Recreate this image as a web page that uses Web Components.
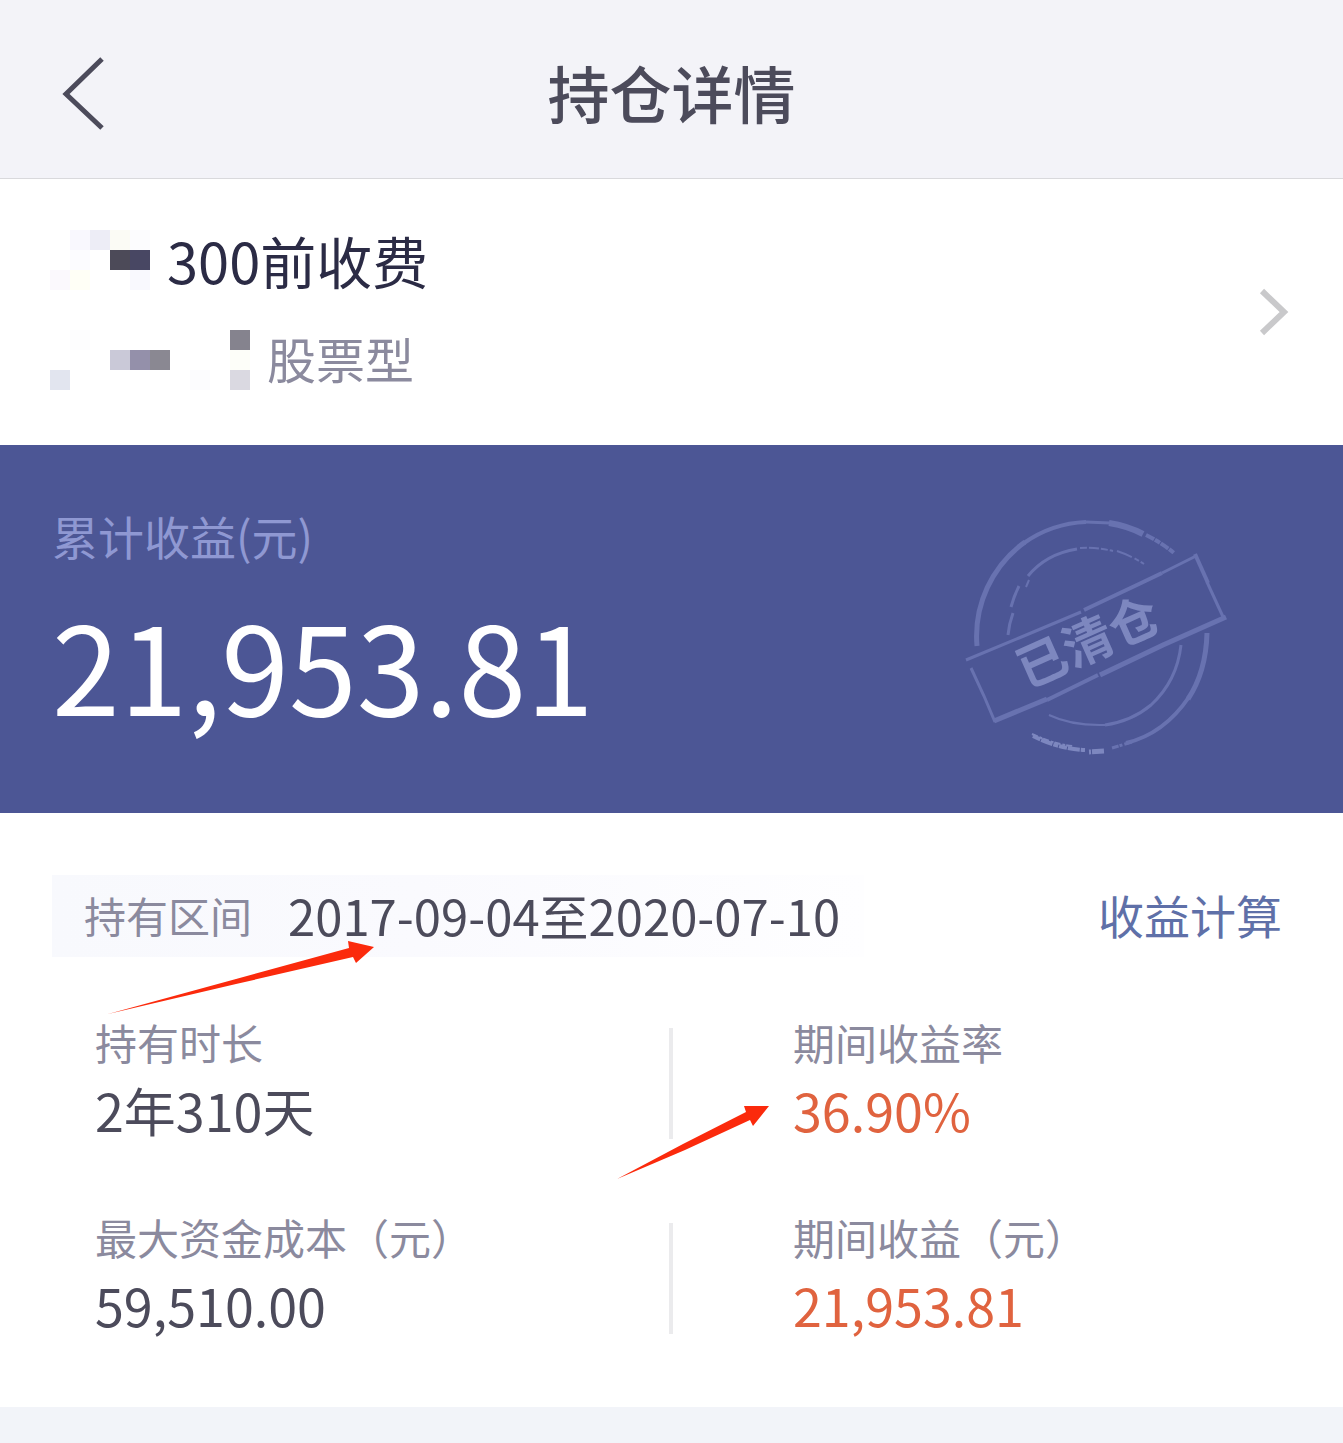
<!DOCTYPE html>
<html lang="zh-CN">
<head>
<meta charset="utf-8">
<meta name="viewport" content="width=device-width, initial-scale=1">
<title>持仓详情</title>
<style>
    body {
        margin: 0;
        min-height: 100vh;
        display: flex;
        flex-direction: column;
        background: #f2f4f9;
        font-family: "Noto Sans CJK SC", sans-serif;
        color: #4c4b5b;

        --ink: #4c4b5b;
        --muted: #8b8a9e;
        --brand: #4c5695;
        --link: #5f70a8;
        --gain: #e0633f;
    }
</style>
</head>
<body>
<nav-header>持仓详情</nav-header>
<main>
    <fund-summary>
        <span slot="name">300前收费</span>
        <span slot="type">股票型</span>
    </fund-summary>
    <profit-banner label="累计收益(元)" value="21,953.81">
        <cleared-stamp>已清仓</cleared-stamp>
    </profit-banner>
    <holding-details>
        <holding-period slot="period" label="持有区间">2017-09-04至2020-07-10</holding-period>
        <a slot="action" href="#calc">收益计算</a>
        <stat-item label="持有时长">2年310天</stat-item>
        <stat-item label="期间收益率" gain marked>36.90%</stat-item>
        <stat-item label="最大资金成本（元）">59,510.00</stat-item>
        <stat-item label="期间收益（元）" gain>21,953.81</stat-item>
    </holding-details>
</main>

<script>
function attach(host, html) {
    const template = document.createElement("template");
    template.innerHTML = html;
    host.attachShadow({ mode: "open" }).append(template.content.cloneNode(true));
}

class NavHeader extends HTMLElement {
    constructor() {
        super();
        attach(this, `
            <style>
                :host {
                    display: grid;
                    grid-template-columns: 160px 1fr 160px;
                    align-items: center;
                    height: 172px;
                    padding-top: 6px;
                    background: #f3f3f8;
                    border-bottom: 1px solid #d9d9dc;
                }

                button {
                    display: flex;
                    padding: 0 0 0 60px;
                    border: 0;
                    background: none;
                    color: var(--ink);
                    cursor: pointer;
                }

                h1 {
                    margin: 0;
                    text-align: center;
                    font-size: 62px;
                    line-height: 80px;
                    font-weight: 500;
                }
            </style>
            <button type="button" aria-label="返回">
                <svg width="48" height="76" viewBox="0 0 48 76" fill="none" stroke="currentColor" stroke-width="5">
                    <path d="M42 5 6 40l36 34"/>
                </svg>
            </button>
            <h1><slot></slot></h1>
        `);
    }
}

// Pixelated blocks that hide part of a line; each cell is [column, row, colour]
class MosaicMask extends HTMLElement {
    static cells = {
        name: [
            [1, 0, "#f9f8fe"], [2, 0, "#ededf6"], [3, 0, "#fbfbf5"], [4, 0, "#fcfcfe"],
            [1, 1, "#fcfcff"], [3, 1, "#4c4a58"], [4, 1, "#484763"],
            [0, 2, "#fbf9fd"], [1, 2, "#fffff6"], [4, 2, "#f9f9fe"]
        ],
        type: [
            [1, 0, "#fdfdfe"], [9, 0, "#85838e"],
            [3, 1, "#cac9d8"], [4, 1, "#9490aa"], [5, 1, "#8a8892"], [9, 1, "#fdfef9"],
            [0, 2, "#e2e5ef"], [7, 2, "#fcfcfe"], [9, 2, "#dad9e1"]
        ]
    };

    constructor() {
        super();
        attach(this, `
            <style>
                :host {
                    display: block;
                    flex: none;
                }

                svg {
                    display: block;
                }
            </style>
            <svg height="60" shape-rendering="crispEdges" aria-hidden="true"></svg>
        `);
    }

    connectedCallback() {
        const svg = this.shadowRoot.querySelector("svg");
        svg.setAttribute("width", Number(this.getAttribute("columns")) * 20);
        svg.innerHTML = MosaicMask.cells[this.getAttribute("kind")]
            .map(([x, y, fill]) => `<rect x="${x * 20}" y="${y * 20}" width="20" height="20" fill="${fill}"/>`)
            .join("");
    }
}

class FundSummary extends HTMLElement {
    constructor() {
        super();
        attach(this, `
            <style>
                :host {
                    display: block;
                    background: #fff;
                }

                a {
                    display: flex;
                    justify-content: space-between;
                    align-items: center;
                    padding: 51px 52px 55px 50px;
                    color: inherit;
                    text-decoration: none;
                }

                a > svg {
                    margin-top: 4px;
                }

                .lines {
                    display: grid;
                    gap: 40px;
                }

                .line {
                    display: flex;
                    gap: 17px;
                    height: 60px;
                }

                .name {
                    font-size: 56px;
                    line-height: 60px;
                    color: #2b2b45;
                }

                .type {
                    font-size: 49px;
                    line-height: 56px;
                    color: var(--muted);
                }
            </style>
            <a href="#fund">
                <span class="lines">
                    <span class="line name"><mosaic-mask kind="name" columns="5"></mosaic-mask><slot name="name"></slot></span>
                    <span class="line type"><mosaic-mask kind="type" columns="10"></mosaic-mask><slot name="type"></slot></span>
                </span>
                <svg width="32" height="48" viewBox="0 0 32 48" fill="none" stroke="#c9c9cb" stroke-width="6" aria-hidden="true">
                    <path d="M3 3 25 24 3 45"/>
                </svg>
            </a>
        `);
    }
}

class ClearedStamp extends HTMLElement {
    constructor() {
        super();
        attach(this, `
            <style>
                :host {
                    display: block;
                    flex: none;
                }

                svg {
                    display: block;
                }

                text {
                    font-size: 50px;
                    font-weight: 700;
                    text-anchor: middle;
                }
            </style>
            <svg width="270" height="264" viewBox="20 -3 270 264" fill="none" stroke="#6872b0">
                <!-- outer ring, worn through in places -->
                <path stroke-width="5" d="M37 146A116 116 0 0 1 85 42"/>
                <path stroke-width="4" d="M84 43A116 116 0 0 1 146 22"/>
                <path stroke-width="3" d="M146 22l24 1"/>
                <path stroke-width="6" d="M169 23Q188 26 203 34"/>
                <path stroke-width="4" stroke-dasharray="9 1 6 1" d="M206 35Q222 43 234 53"/>
                <path stroke-width="5" d="M267 133Q266 172 248 199"/>
                <path stroke-width="4" d="M249 197Q224 234 186 243"/>
                <path stroke-width="3" stroke-dasharray="8 2 3 1" d="M192 242l-20 6"/>
                <path stroke="#7d87bf" stroke-width="4" stroke-dasharray="8 1 12 1 5 1" d="M93 236Q119 249 145 250"/>
                <path stroke="#7d87bf" stroke-width="2" stroke-dasharray="6 2 3 1" d="M92 234Q116 245 134 246"/>
                <path stroke="#7d87bf" stroke-width="5" stroke-dasharray="2 1 12" d="M149 252l16-1"/>
                <!-- inner ring -->
                <path stroke-width="3" d="M68 135Q69 124 73 113M71 107Q74 96 79 86"/>
                <path stroke-width="2" d="M86 87l3-7"/>
                <path stroke-width="3" d="M88 76Q106 54 137 49"/>
                <path stroke-width="2" stroke-dasharray="7 2 10 2" d="M140 48Q156 47 173 51"/>
                <path stroke-width="2" stroke-dasharray="16 3 5 2" d="M177 51Q192 56 204 64"/>
                <path stroke-width="3" d="M241 145Q237 181 211 205Q192 221 165 225"/>
                <path stroke-width="2" d="M165 225Q132 226 109 215"/>
                <!-- ribbon -->
                <path stroke-width="3" d="M26 160 79 138 141 112"/>
                <path stroke-width="4" d="M144 110 199 84 222 73"/>
                <path stroke-width="3" d="M222 73 256 56"/>
                <path stroke-width="4" d="M255 54 268 83"/>
                <path stroke-width="3" d="M267 82 284 119"/>
                <path stroke-width="5" d="M286 117 223 145 160 175"/>
                <path stroke-width="4" d="M158 175 107 200"/>
                <path stroke-width="5" d="M107 199 54 221"/>
                <path stroke-width="3" d="M31 168 44 196 55 222"/>
                <text transform="translate(148 142) rotate(-24)" y="18" fill="#7d87bf" stroke="none"></text>
            </svg>
        `);
        this.shadowRoot.querySelector("text").textContent = this.textContent.trim();
    }
}

class ProfitBanner extends HTMLElement {
    constructor() {
        super();
        attach(this, `
            <style>
                :host {
                    display: flex;
                    justify-content: space-between;
                    align-items: flex-start;
                    padding: 52px 113px 52px 52px;
                    background: var(--brand);
                }

                .total {
                    padding-top: 8px;
                }

                .label {
                    font-size: 46px;
                    line-height: 60px;
                    color: #8f98d2;
                }

                .value {
                    margin-top: 18px;
                    font-size: 122px;
                    line-height: 160px;
                    color: #fff;
                }
            </style>
            <div class="total">
                <div class="label"></div>
                <div class="value"></div>
            </div>
            <slot></slot>
        `);
        this.shadowRoot.querySelector(".label").textContent = this.getAttribute("label");
        this.shadowRoot.querySelector(".value").textContent = this.getAttribute("value");
    }
}

class HoldingPeriod extends HTMLElement {
    constructor() {
        super();
        attach(this, `
            <style>
                :host {
                    position: relative;
                    display: flex;
                    align-items: center;
                    gap: 36px;
                    height: 78px;
                    padding: 0 24px 4px 32px;
                    background: linear-gradient(90deg, #f8f9fd, #fafafe 45%, #fefeff);
                    white-space: nowrap;
                }

                .label {
                    font-size: 42px;
                    color: var(--muted);
                }

                .value {
                    font-size: 49px;
                }

                svg {
                    position: absolute;
                    left: 54px;
                    top: 64px;
                }
            </style>
            <span class="label"></span>
            <span class="value"><slot></slot></span>
            <svg width="270" height="78" viewBox="0 0 270 78" fill="#fb2a0c" aria-hidden="true">
                <path d="M2 75 130 40 243 9 242 2 268 8 250 24 247 18 130 45Z"/>
            </svg>
        `);
        this.shadowRoot.querySelector(".label").textContent = this.getAttribute("label");
    }
}

class StatItem extends HTMLElement {
    constructor() {
        super();
        attach(this, `
            <style>
                :host {
                    position: relative;
                    display: block;
                }

                .label {
                    font-size: 42px;
                    line-height: 64px;
                    color: var(--muted);
                }

                .value {
                    font-size: 52px;
                    line-height: 72px;
                }

                :host([gain]) .value {
                    color: var(--gain);
                }

                svg {
                    display: none;
                    position: absolute;
                    right: calc(100% + 22px);
                    top: 94px;
                }

                :host([marked]) svg {
                    display: block;
                }
            </style>
            <div class="label"></div>
            <div class="value"><slot></slot></div>
            <svg width="156" height="78" viewBox="0 0 156 78" fill="#fb2a0c" aria-hidden="true">
                <path d="M2 75 68 40 131 8 129 2H154L138 22 135 16 70 46Z"/>
            </svg>
        `);
        this.shadowRoot.querySelector(".label").textContent = this.getAttribute("label");
    }
}

class HoldingDetails extends HTMLElement {
    constructor() {
        super();
        attach(this, `
            <style>
                :host {
                    display: block;
                    padding: 62px 61px 66px 52px;
                    background: #fff;
                }

                .top {
                    display: flex;
                    justify-content: space-between;
                    align-items: center;
                }

                ::slotted(a) {
                    padding-bottom: 4px;
                    font-size: 46px;
                    color: var(--link);
                    text-decoration: none;
                }

                .stats {
                    display: grid;
                    grid-template-columns: 1fr 1fr;
                    gap: 59px 242px;
                    margin-top: 53px;
                    padding: 0 33px 0 43px;
                    background:
                        linear-gradient(#ebebed, #ebebed) calc(50% + 4px) 18px / 4px 111px no-repeat,
                        linear-gradient(#ebebed, #ebebed) calc(50% + 4px) 213px / 4px 111px no-repeat;
                }
            </style>
            <div class="top">
                <slot name="period"></slot>
                <slot name="action"></slot>
            </div>
            <div class="stats"><slot></slot></div>
        `);
    }
}

customElements.define("nav-header", NavHeader);
customElements.define("mosaic-mask", MosaicMask);
customElements.define("fund-summary", FundSummary);
customElements.define("cleared-stamp", ClearedStamp);
customElements.define("profit-banner", ProfitBanner);
customElements.define("holding-period", HoldingPeriod);
customElements.define("stat-item", StatItem);
customElements.define("holding-details", HoldingDetails);
</script>
</body>
</html>
